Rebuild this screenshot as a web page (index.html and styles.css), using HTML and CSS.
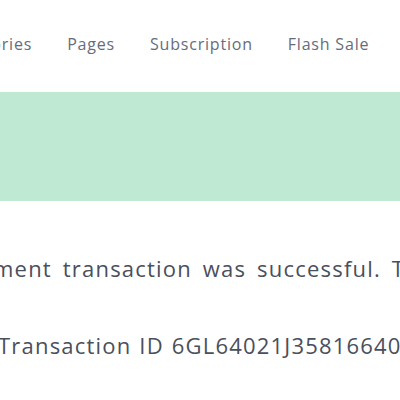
FILE: index.html
```html
<!DOCTYPE html>
<html lang="en">
<head>
<meta charset="utf-8">
<title>Payment success</title>
<link rel="stylesheet" href="styles.css">
</head>
<body>
  <header class="topbar">
    <nav class="menu">
      <a class="menu-item" href="#">Categories</a>
      <a class="menu-item" href="#">Pages</a>
      <a class="menu-item" href="#">Subscription</a>
      <a class="menu-item" href="#">Flash Sale</a>
    </nav>
  </header>
  <section class="banner"></section>
  <main class="content">
    <p class="message">Your payment transaction was successful. Thank you for your order.</p>
    <p class="txn">Transaction ID 6GL64021J35816640X</p>
  </main>
</body>
</html>
```
FILE: styles.css
```css
html, body {
  margin: 0;
  padding: 0;
  background: #ffffff;
  overflow: hidden;
}
body {
  font-family: "Open Sans", "Noto Sans", sans-serif;
  width: 400px;
  height: 400px;
}
.topbar {
  height: 92px;
  display: flex;
  align-items: flex-start;
}
.menu {
  display: flex;
  gap: 35px;
  margin-left: -55px;
  padding-top: 32px;
  white-space: nowrap;
}
.menu-item {
  color: #676c7c;
  text-decoration: none;
  font-size: 16px;
  line-height: 24px;
  letter-spacing: 0.8px;
}
.banner {
  height: 109px;
  background: #bfe9d3;
}
.content {
  padding-top: 52px;
  white-space: nowrap;
}
.message, .txn {
  margin: 0;
  color: #4a4f5c;
  font-size: 22px;
  line-height: 30px;
  letter-spacing: 1.2px;
}
.message {
  margin-left: -111px;
  word-spacing: 4px;
}
.txn {
  margin-top: 47px;
  margin-left: -2px;
  word-spacing: 1px;
}
```
